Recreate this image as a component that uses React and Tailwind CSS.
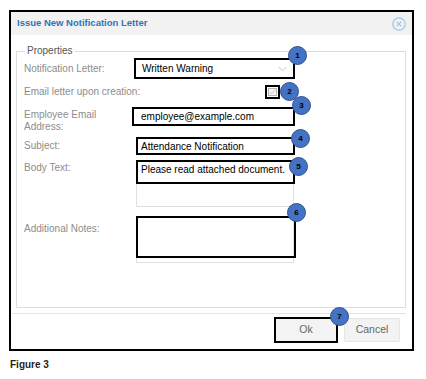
import React from 'react';

const Badge = ({ n, className }) => (
    <div className={`absolute w-[19px] h-[19px] rounded-full bg-[#4472c4] border border-[#2f528f] flex items-center justify-center text-[8px] font-bold text-black leading-none ${className}`}>
        {n}
    </div>
);

const Label = ({ children, className = '' }) => (
    <div className={`w-[112px] shrink-0 whitespace-nowrap text-[10px] leading-[12px] text-[#8c8c8c] ${className}`}>{children}</div>
);

export default function App() {
    return (
        <div className="relative w-[426px] h-[379px] bg-white font-['Liberation_Sans',Arial,sans-serif]">
            <div className="pt-[10px] pl-[9px]">
                {/* Dialog */}
                <div className="w-[405px] h-[341px] border-2 border-black flex flex-col">
                    <div className="h-[23px] bg-[#f2f2f2] flex items-center justify-between pl-[6px] pr-[6px]">
                        <span className="text-[9.5px] font-bold text-[#2e75b6]">Issue New Notification Letter</span>
                        <svg width="14" height="14" viewBox="0 0 14 14" fill="none" stroke="#9dc3e6" strokeWidth="1.2">
                            <circle cx="7" cy="7" r="6.2" />
                            <path d="M4.6 4.6 L9.4 9.4 M9.4 4.6 L4.6 9.4" />
                        </svg>
                    </div>

                    <fieldset className="mt-[10px] ml-[5px] w-[390px] h-[263px] border border-[#dddddd]">
                        <legend className="ml-[8px] px-[2px] text-[10px] leading-[12px] text-[#555]">Properties</legend>
                        <div className="pl-[7px] flex flex-col">
                            {/* Notification Letter */}
                            <div className="flex items-center mt-[1px]">
                                <Label>Notification Letter:</Label>
                                <div className="-ml-[2px] w-[161px] h-[21px] border-2 border-black flex items-center justify-between pl-[6px] pr-[6px]">
                                    <span className="text-[10px] text-black">Written Warning</span>
                                    <svg width="9" height="6" viewBox="0 0 9 6" fill="none" stroke="#c8c8c8" strokeWidth="1">
                                        <path d="M0.5 0.8 L4.5 4.8 L8.5 0.8" />
                                    </svg>
                                </div>
                            </div>

                            {/* Email letter */}
                            <div className="flex items-center mt-[6px] h-[14px]">
                                <Label>Email letter upon creation:</Label>
                                <div className="ml-[129px] w-[15px] h-[14px] border-2 border-black flex items-center justify-center">
                                    <div className="w-[9px] h-[8px] border border-[#b5b5b5] bg-[#f5f5f5] flex items-center justify-center">
                                        <svg width="7" height="6" viewBox="0 0 7 6" fill="none" stroke="#c4c4c4" strokeWidth="1">
                                            <path d="M0.8 3 L2.6 4.8 L6.2 0.8" />
                                        </svg>
                                    </div>
                                </div>
                            </div>

                            {/* Employee Email */}
                            <div className="flex items-start mt-[8px]">
                                <Label className="pt-[2px]">Employee Email<br />Address:</Label>
                                <div className="-ml-[4px] w-[163px] h-[19px] border-2 border-black flex items-center pl-[7px]">
                                    <span className="text-[10px] text-black">employee@example.com</span>
                                </div>
                            </div>

                            {/* Subject */}
                            <div className="flex items-center mt-[4px]">
                                <Label>Subject:</Label>
                                <div className="w-[159px] h-[18px] border-2 border-black flex items-center pl-[3px]">
                                    <span className="text-[10px] text-black">Attendance Notification</span>
                                </div>
                            </div>

                            {/* Body Text */}
                            <div className="flex items-start mt-[5px]">
                                <Label className="pt-[2px]">Body Text:</Label>
                                <div className="relative w-[158px] h-[47px] border border-[#e0e0e0]">
                                    <div className="absolute -left-[1px] -top-[1px] w-[159px] h-[24px] border-2 border-black pl-[3px] pt-[2px] text-[10px] leading-[12px] text-black">
                                        Please read attached document.
                                    </div>
                                </div>
                            </div>

                            {/* Additional Notes */}
                            <div className="flex items-start mt-[9px]">
                                <Label className="pt-[7px]">Additional Notes:</Label>
                                <div className="relative w-[158px] h-[47px] border border-[#e0e0e0]">
                                    <div className="absolute -left-[1px] -top-[1px] w-[160px] h-[42px] border-2 border-black" />
                                </div>
                            </div>
                        </div>
                    </fieldset>

                    <div className="mt-[5px] ml-[1px] w-[394px] h-px bg-[#e3e3e3]" />

                    <div className="flex justify-end items-start gap-[6px] pr-[12px] mt-[3px]">
                        <button className="w-[64px] h-[26px] border-2 border-black bg-[#f3f3f3] text-[10.5px] text-[#666]">Ok</button>
                        <button className="mt-[1px] w-[56px] h-[24px] border border-[#e6e6e6] rounded-[2px] bg-[#f3f3f3] text-[10.5px] text-[#666]">Cancel</button>
                    </div>
                </div>
            </div>

            <div className="absolute left-[273px] top-[350px] w-[80px] h-[1px] bg-black" />

            <div className="pl-[10px] mt-[8px] text-[10px] font-bold text-[#1f1f1f] leading-[12px]">Figure 3</div>

            <Badge n="1" className="left-[288px] top-[46px]" />
            <Badge n="2" className="left-[280px] top-[82px]" />
            <Badge n="3" className="left-[292px] top-[96px]" />
            <Badge n="4" className="left-[291px] top-[129px]" />
            <Badge n="5" className="left-[289px] top-[157px]" />
            <Badge n="6" className="left-[287px] top-[203px]" />
            <Badge n="7" className="left-[330px] top-[307px]" />
        </div>
    );
}
